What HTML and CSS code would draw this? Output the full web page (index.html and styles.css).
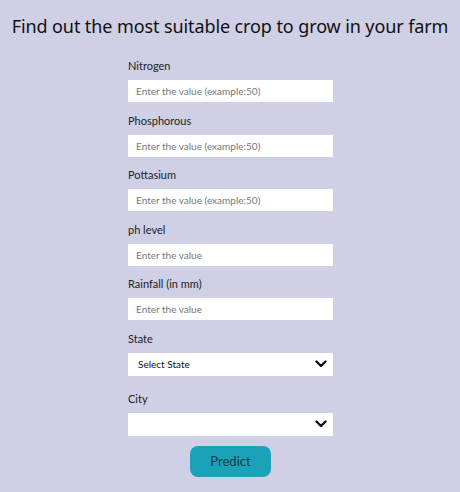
FILE: index.html
```html
<!DOCTYPE html>
<html>
<head>
<meta charset="utf-8">
<link rel="stylesheet" href="styles.css">
</head>
<body>
<h1 class="title">Find out the most suitable crop to grow in your farm</h1>
<form class="form">
  <label class="lbl">Nitrogen</label>
  <input class="field" type="text" placeholder="Enter the value (example:50)">
  <label class="lbl">Phosphorous</label>
  <input class="field" type="text" placeholder="Enter the value (example:50)">
  <label class="lbl">Pottasium</label>
  <input class="field" type="text" placeholder="Enter the value (example:50)">
  <label class="lbl">ph level</label>
  <input class="field" type="text" placeholder="Enter the value">
  <label class="lbl">Rainfall (in mm)</label>
  <input class="field" type="text" placeholder="Enter the value">
  <label class="lbl">State</label>
  <div class="select">
    <span class="sel-text">Select State</span>
    <svg class="chev" width="12" height="8" viewBox="0 0 12 8"><path d="M1.5 1.5 L6 6 L10.5 1.5" fill="none" stroke="#111" stroke-width="2.4" stroke-linecap="round" stroke-linejoin="round"/></svg>
  </div>
  <label class="lbl">City</label>
  <div class="select">
    <span class="sel-text"></span>
    <svg class="chev" width="12" height="8" viewBox="0 0 12 8"><path d="M1.5 1.5 L6 6 L10.5 1.5" fill="none" stroke="#111" stroke-width="2.4" stroke-linecap="round" stroke-linejoin="round"/></svg>
  </div>
  <div class="btn-row"><button class="btn" type="button">Predict</button></div>
</form>
</body>
</html>
```
FILE: styles.css
```css
html, body {
  margin: 0;
  padding: 0;
  background: #cfcfe6;
}
body {
  width: 460px;
  height: 492px;
  overflow: hidden;
}
.title {
  margin: 0;
  padding-top: 14px;
  text-align: center;
  white-space: nowrap;
  font-family: "Noto Sans", sans-serif;
  font-weight: 400;
  font-size: 18px;
  line-height: 24px;
  color: #111;
  letter-spacing: -0.1px;
}
.form {
  width: 205px;
  margin: 21px 0 0 128px;
  display: flex;
  flex-direction: column;
  font-family: "Lato", sans-serif;
}
.lbl {
  font-size: 11px;
  line-height: 14px;
  color: #222;
  margin-bottom: 7px;
}
.field {
  box-sizing: border-box;
  height: 22px;
  border: none;
  outline: none;
  background: #fff;
  padding: 0 8px;
  font-family: "Lato", sans-serif;
  font-size: 10px;
  margin-bottom: 11.5px;
}
.field::placeholder {
  color: #777;
}
.select {
  box-sizing: border-box;
  height: 23px;
  background: #fff;
  display: flex;
  align-items: center;
  justify-content: space-between;
  padding: 0 6px 0 10px;
  font-size: 10px;
  color: #111;
  margin-bottom: 16px;
}
.btn-row {
  display: flex;
  margin-top: -6px;
  padding-left: 62px;
}
.btn {
  width: 81px;
  height: 31px;
  border: none;
  border-radius: 8px;
  background: #1aa3b8;
  color: #0d3b47;
  font-family: "Lato", sans-serif;
  font-size: 13px;
}
```
